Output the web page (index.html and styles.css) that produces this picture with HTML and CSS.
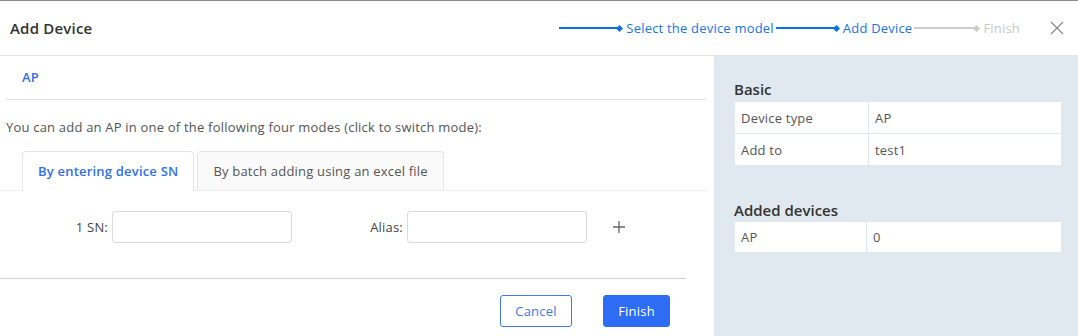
FILE: index.html
```html
<!DOCTYPE html>
<html lang="en">
<head>
  <meta charset="UTF-8" />
  <title>Add Device</title>
  <link rel="stylesheet" href="styles.css">
</head>
<body>
  <div class="dialog">
    <div class="dialog-header">
      <h2 class="dialog-title">Add Device</h2>
      <div class="steps">
        <div class="step done"><span class="step-line"></span><span class="step-dot"></span><span class="step-label">Select the device model</span></div>
        <div class="step done"><span class="step-line"></span><span class="step-dot"></span><span class="step-label">Add Device</span></div>
        <div class="step"><span class="step-line"></span><span class="step-dot"></span><span class="step-label">Finish</span></div>
      </div>
      <button class="close" aria-label="Close">
        <svg width="14" height="14" viewBox="0 0 14 14"><path d="M1 1L13 13M13 1L1 13" stroke="#8a8a8a" stroke-width="1.3" fill="none"/></svg>
      </button>
    </div>

    <div class="dialog-body">
      <div class="main">
        <div class="type-bar"><span class="type-name">AP</span></div>
        <p class="hint">You can add an AP in one of the following four modes (click to switch mode):</p>

        <div class="tabs">
          <div class="tab active">By entering device SN</div>
          <div class="tab">By batch adding using an excel file</div>
        </div>

        <div class="form-row">
          <label class="field-label sn">1 SN:</label>
          <input class="field" type="text">
          <label class="field-label alias">Alias:</label>
          <input class="field" type="text">
          <span class="add">
            <svg width="14" height="14" viewBox="0 0 14 14"><path d="M7 1V13M1 7H13" stroke="#666" stroke-width="1.3" fill="none"/></svg>
          </span>
        </div>

        <div class="footer">
          <button class="btn btn-cancel">Cancel</button>
          <button class="btn btn-primary">Finish</button>
        </div>
      </div>

      <div class="aside">
        <h3 class="aside-title">Basic</h3>
        <table class="info">
          <tr><td class="key">Device type</td><td>AP</td></tr>
          <tr><td class="key">Add to</td><td>test1</td></tr>
        </table>

        <h3 class="aside-title added">Added devices</h3>
        <table class="info short">
          <tr><td class="key narrow">AP</td><td>0</td></tr>
        </table>
      </div>
    </div>
  </div>
</body>
</html>
```

FILE: styles.css
```css
body {
  margin: 0;
  font-family: 'Open Sans', 'Noto Sans', sans-serif;
  font-size: 13px;
  letter-spacing: 0.2px;
  color: #555;
  background: #fff;
}

.dialog {
  width: 1078px;
  height: 336px;
  border-top: 1px solid #8c8c8c;
  box-sizing: border-box;
  display: flex;
  flex-direction: column;
  overflow: hidden;
}

.dialog-header {
  height: 54px;
  flex-shrink: 0;
  display: flex;
  align-items: center;
  border-bottom: 1px solid #e6e6e6;
  padding: 0 0 0 10px;
}

.dialog-title {
  margin: 0;
  font-size: 15px;
  font-weight: 600;
  color: #333;
  flex: 1;
}

.steps {
  display: flex;
  align-items: center;
}

.step {
  display: flex;
  align-items: center;
  color: #c8c8c8;
}

.step-line {
  width: 58px;
  height: 2px;
  background: #cccccc;
}

.step-dot {
  width: 5px;
  height: 5px;
  background: #cccccc;
  transform: rotate(45deg);
  margin: 0 4px 0 0;
}

.step-label {
  line-height: 20px;
}

.step.done .step-label {
  padding-right: 2px;
}

.step.done {
  color: #1a73e8;
}

.step.done .step-line,
.step.done .step-dot {
  background: #0b6fe6;
}

.step + .step + .step .step-line {
  width: 60px;
}

.close {
  border: 0;
  background: none;
  padding: 0;
  margin: 0 14px 0 30px;
  width: 14px;
  height: 14px;
  display: flex;
}

.dialog-body {
  flex: 1;
  display: flex;
}

.main {
  width: 714px;
  flex-shrink: 0;
}

.type-bar {
  margin: 0 8px 0 6px;
  height: 43px;
  line-height: 43px;
  padding-left: 16px;
  border-bottom: 1px solid #e3e3e3;
}

.type-name {
  color: #2f6ff0;
  font-weight: 600;
}

.hint {
  margin: 17px 0 0 6px;
  line-height: 20px;
}

.tabs {
  display: flex;
  gap: 3px;
  margin: 14px 0 0;
  padding-left: 22px;
  border-bottom: 1px solid #ebebeb;
  width: 684px;
}

.tab {
  height: 38px;
  line-height: 38px;
  padding: 0 15px;
  border: 1px solid #e6e6e6;
  border-bottom: 0;
  border-radius: 4px 4px 0 0;
  background: #fafafa;
  margin-bottom: -1px;
}

.tab.active {
  background: #fff;
  color: #2f6ff0;
  font-weight: 600;
  height: 39px;
}

.form-row {
  display: flex;
  align-items: center;
  margin-top: 20px;
  height: 32px;
}

.field-label {
  text-align: right;
  padding-right: 4px;
  color: #444;
}

.field-label.sn {
  width: 108px;
}

.field-label.alias {
  width: 111px;
}

.field {
  width: 180px;
  height: 32px;
  box-sizing: border-box;
  border: 1px solid #d9d9d9;
  border-radius: 3px;
  outline: none;
}

.add {
  margin-left: 25px;
  display: flex;
}

.footer {
  width: 686px;
  margin-top: 35px;
  border-top: 1px solid #d0d0d0;
  display: flex;
  justify-content: flex-end;
  gap: 31px;
  padding: 16px 16px 0 0;
  box-sizing: border-box;
}

.btn {
  height: 32px;
  border-radius: 3px;
  font-family: inherit;
  font-size: 13px;
  letter-spacing: 0.2px;
  padding: 0;
  cursor: pointer;
}

.btn-cancel {
  width: 72px;
  background: #fff;
  border: 1px solid #3f78f2;
  color: #3f78f2;
}

.btn-primary {
  width: 67px;
  background: #2d6df6;
  border: 1px solid #2d6df6;
  color: #fff;
}

.aside {
  flex: 1;
  background: #e1e9f0;
  padding: 0 16px 0 20px;
}

.aside-title {
  margin: 21px 0 0;
  font-size: 15px;
  font-weight: 600;
  color: #333;
  line-height: 24px;
  letter-spacing: 0;
}

.aside-title.added {
  margin-top: 34px;
  line-height: 21px;
}

.info {
  width: 100%;
  border-collapse: collapse;
  background: #fff;
}

.info td {
  border: 1px solid #e1e9f0;
  height: 32px;
  padding: 0 6px;
  box-sizing: border-box;
}

.info.short td {
  height: 31px;
}

.info td.key {
  width: 134px;
}

.info td.key.narrow {
  width: 132px;
}
```
